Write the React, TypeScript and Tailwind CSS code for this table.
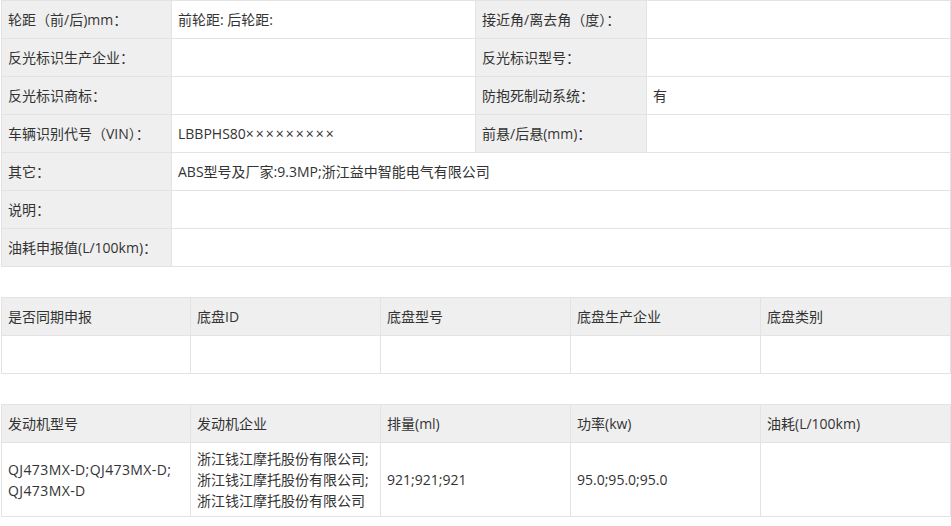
import type { ReactNode } from 'react';

type CellProps = {
  children?: ReactNode;
  width: string;
  label?: boolean;
  grow?: boolean;
};

function Cell({ children, width, label, grow }: CellProps) {
  return (
    <div
      className={`${grow ? 'flex-1' : width} flex items-center border-l border-t border-[#e3e3e3] px-[6px] py-[5px] ${
        label ? 'bg-[#efefef]' : 'bg-white'
      }`}
    >
      <div className="leading-[21px]">{children}</div>
    </div>
  );
}

const vin = (
  <>
    LBBPHS80<span className="tracking-[2px]">×××××××××</span>
  </>
);

const specRows: [string, ReactNode, string | null, string | null][] = [
  ['轮距（前/后)mm：', '前轮距: 后轮距:', '接近角/离去角（度）：', ''],
  ['反光标识生产企业：', '', '反光标识型号：', ''],
  ['反光标识商标：', '', '防抱死制动系统：', '有'],
  ['车辆识别代号（VIN）：', vin, '前悬/后悬(mm)：', ''],
  ['其它：', 'ABS型号及厂家:9.3MP;浙江益中智能电气有限公司', null, null],
  ['说明：', '', null, null],
  ['油耗申报值(L/100km)：', '', null, null],
];

const chassisHead = ['是否同期申报', '底盘ID', '底盘型号', '底盘生产企业', '底盘类别'];
const engineHead = ['发动机型号', '发动机企业', '排量(ml)', '功率(kw)', '油耗(L/100km)'];
const colWidths = ['w-[189px]', 'w-[190px]', 'w-[190px]', 'w-[190px]', 'w-[190px]'];

export default function App() {
  return (
    <div
      className="min-h-screen bg-white pl-[1px] text-[14px] text-[#333333]"
      style={{ fontFamily: '"Open Sans", "Noto Sans CJK SC", sans-serif' }}
    >
      <div className="w-[950px] border-b border-r border-[#e3e3e3]">
        {specRows.map(([l1, v1, l2, v2]) => (
          <div key={l1} className="flex h-[38px]">
            <Cell width="w-[170px]" label>
              {l1}
            </Cell>
            {l2 === null ? (
              <Cell width="" grow>
                {v1}
              </Cell>
            ) : (
              <>
                <Cell width="w-[304px]">{v1}</Cell>
                <Cell width="w-[171px]" label>
                  {l2}
                </Cell>
                <Cell width="" grow>
                  {v2}
                </Cell>
              </>
            )}
          </div>
        ))}
      </div>

      <div className="mt-[30px] w-[950px] border-b border-r border-[#e3e3e3]">
        <div className="flex h-[38px]">
          {chassisHead.map((h, i) => (
            <Cell key={h} width={colWidths[i]} label>
              {h}
            </Cell>
          ))}
        </div>
        <div className="flex h-[38px]">
          {chassisHead.map((h, i) => (
            <Cell key={h} width={colWidths[i]} />
          ))}
        </div>
      </div>

      <div className="mt-[30px] w-[950px] border-b border-r border-[#e3e3e3]">
        <div className="flex h-[38px]">
          {engineHead.map((h, i) => (
            <Cell key={h} width={colWidths[i]} label>
              {h}
            </Cell>
          ))}
        </div>
        <div className="flex h-[74px]">
          <Cell width={colWidths[0]}>
            <span className="tracking-[0.4px]">QJ473MX-D;QJ473MX-D;</span>
            <br />
            <span className="tracking-[0.4px]">QJ473MX-D</span>
          </Cell>
          <Cell width={colWidths[1]}>
            浙江钱江摩托股份有限公司;
            <br />
            浙江钱江摩托股份有限公司;
            <br />
            浙江钱江摩托股份有限公司
          </Cell>
          <Cell width={colWidths[2]}>921;921;921</Cell>
          <Cell width={colWidths[3]}>95.0;95.0;95.0</Cell>
          <Cell width={colWidths[4]} />
        </div>
      </div>
    </div>
  );
}
